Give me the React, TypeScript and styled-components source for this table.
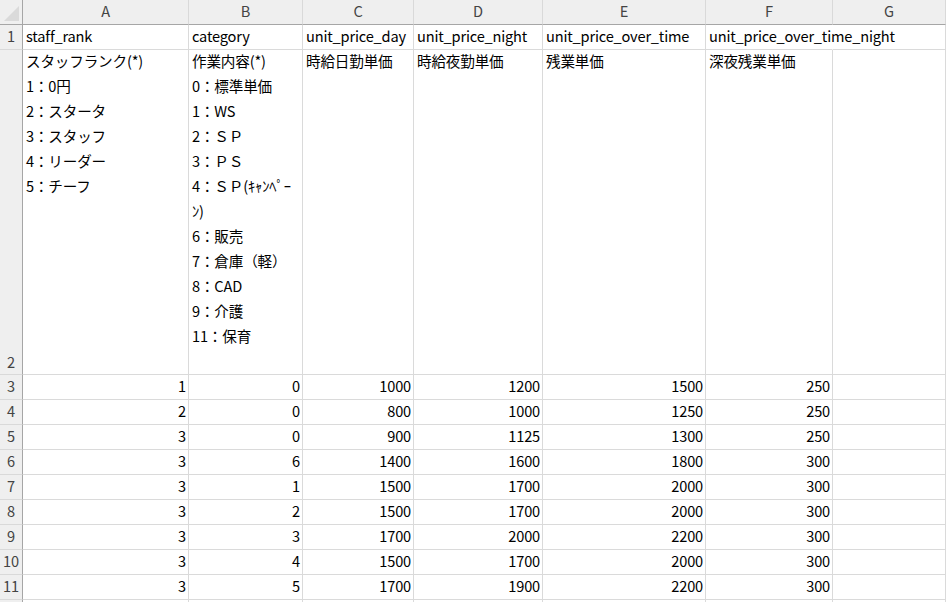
import React from "react";
import styled, { createGlobalStyle } from "styled-components";

const Global = createGlobalStyle`
  html, body { margin: 0; padding: 0; background: #ffffff; }
  body {
    font-family: "Noto Sans CJK JP", "Noto Sans", sans-serif;
    color: #000;
  }
`;

const COLS = [23, 166, 114, 111, 129, 163, 127, 113];
const LETTERS = ["A", "B", "C", "D", "E", "F", "G"];

const Sheet = styled.div`
  display: grid;
  grid-template-columns: ${COLS.map((c) => c + "px").join(" ")};
  grid-template-rows: 25px 25px 325px repeat(10, 25px);
  width: 948px;
  height: 602px;
  overflow: hidden;
  font-size: 14.6px;
  letter-spacing: -0.18px;
`;

const Corner = styled.div`
  position: relative;
  background: #efefef;
  border-right: 1px solid #a6a6a6;
  border-bottom: 1px solid #a6a6a6;
  box-sizing: border-box;
`;

const CornerTriangle = styled.div`
  position: absolute;
  right: 3px;
  bottom: 3px;
  width: 0;
  height: 0;
  border-left: 15px solid transparent;
  border-bottom: 15px solid #dadada;
`;

const ColHeader = styled.div`
  display: flex;
  align-items: center;
  justify-content: center;
  padding-bottom: 3px;
  background: #efefef;
  border-right: 1px solid #d9d9d9;
  border-bottom: 1px solid #a6a6a6;
  box-sizing: border-box;
  color: #444;
  font-size: 14.6px;
`;

const RowHeader = styled.div<{ $bottom?: boolean }>`
  display: flex;
  align-items: ${(p) => (p.$bottom ? "flex-end" : "center")};
  justify-content: center;
  padding-bottom: ${(p) => (p.$bottom ? "1px" : "3px")};
  background: #efefef;
  border-right: 1px solid #a6a6a6;
  border-bottom: 1px solid #d9d9d9;
  box-sizing: border-box;
  color: #444;
  font-size: 14.6px;
  line-height: 22px;
`;

const Cell = styled.div<{ $right?: boolean; $noRight?: boolean }>`
  display: flex;
  align-items: center;
  justify-content: ${(p) => (p.$right ? "flex-end" : "flex-start")};
  padding: 0 ${(p) => (p.$right ? "2px" : "3px")} 3px 3px;
  border-right: 1px solid ${(p) => (p.$noRight ? "transparent" : "#dadada")};
  border-bottom: 1px solid #dadada;
  box-sizing: border-box;
  white-space: nowrap;
  overflow: visible;
  position: relative;
  z-index: ${(p) => (p.$noRight ? 1 : 0)};
`;

const MultiCell = styled.div`
  display: flex;
  flex-direction: column;
  padding: 0 3px;
  border-right: 1px solid #dadada;
  border-bottom: 1px solid #dadada;
  box-sizing: border-box;
  white-space: nowrap;
`;

const Line = styled.div`
  height: 25px;
  line-height: 22px;
`;

const row1 = [
  "staff_rank",
  "category",
  "unit_price_day",
  "unit_price_night",
  "unit_price_over_time",
  "unit_price_over_time_night",
  "",
];

const row2: string[][] = [
  ["スタッフランク(*)", "1：0円", "2：スタータ", "3：スタッフ", "4：リーダー", "5：チーフ"],
  [
    "作業内容(*)",
    "0：標準単価",
    "1：WS",
    "2：ＳＰ",
    "3：ＰＳ",
    "4：ＳＰ(ｷｬﾝﾍﾟｰ",
    "ﾝ)",
    "6：販売",
    "7：倉庫（軽）",
    "8：CAD",
    "9：介護",
    "11：保育",
  ],
  ["時給日勤単価"],
  ["時給夜勤単価"],
  ["残業単価"],
  ["深夜残業単価"],
  [],
];

const data: (number | "")[][] = [
  [1, 0, 1000, 1200, 1500, 250, ""],
  [2, 0, 800, 1000, 1250, 250, ""],
  [3, 0, 900, 1125, 1300, 250, ""],
  [3, 6, 1400, 1600, 1800, 300, ""],
  [3, 1, 1500, 1700, 2000, 300, ""],
  [3, 2, 1500, 1700, 2000, 300, ""],
  [3, 3, 1700, 2000, 2200, 300, ""],
  [3, 4, 1500, 1700, 2000, 300, ""],
  [3, 5, 1700, 1900, 2200, 300, ""],
];

export default function App() {
  return (
    <>
      <Global />
      <Sheet>
        <Corner>
          <CornerTriangle />
        </Corner>
        {LETTERS.map((l) => (
          <ColHeader key={l}>{l}</ColHeader>
        ))}

        <RowHeader>1</RowHeader>
        {row1.map((t, i) => (
          <Cell key={"r1" + i} $noRight={i === 5}>
            {t}
          </Cell>
        ))}

        <RowHeader $bottom>2</RowHeader>
        {row2.map((lines, i) => (
          <MultiCell key={"r2" + i}>
            {lines.map((t, j) => (
              <Line key={j}>{t}</Line>
            ))}
          </MultiCell>
        ))}

        {data.map((r, ri) => (
          <React.Fragment key={"d" + ri}>
            <RowHeader>{ri + 3}</RowHeader>
            {r.map((v, ci) => (
              <Cell key={ci} $right>
                {v}
              </Cell>
            ))}
          </React.Fragment>
        ))}

        <RowHeader />
        {LETTERS.map((l) => (
          <Cell key={"e" + l} />
        ))}
      </Sheet>
    </>
  );
}
